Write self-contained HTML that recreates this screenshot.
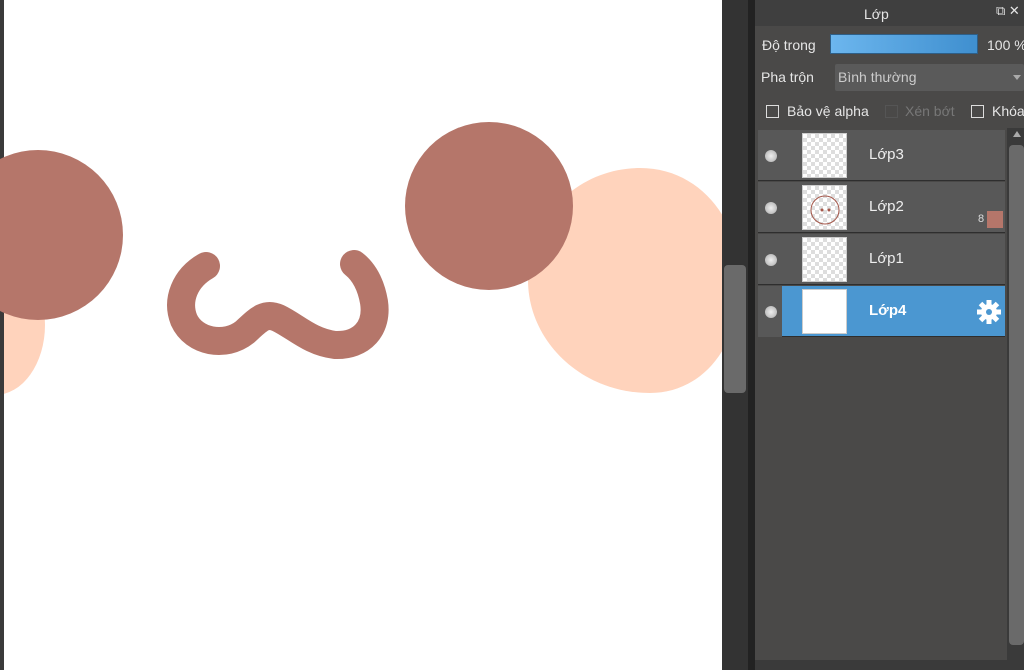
<!DOCTYPE html>
<html><head><meta charset="utf-8"><style>
*{margin:0;padding:0;box-sizing:border-box}
body{width:1024px;height:670px;overflow:hidden;background:#fff;position:relative;font-family:"Liberation Sans","DejaVu Sans",sans-serif;font-size:14px}
.abs{position:absolute;white-space:nowrap}
.t{color:#e6e6e6}
.row{position:absolute;left:758px;width:247px;height:51px;background:#585858;border-bottom:1px solid #2e2e2e}
.eye{position:absolute;left:7px;top:20px;width:12px;height:12px;border-radius:50%;background:radial-gradient(#eee,#aaa)}
.th{position:absolute;left:44px;top:3px;width:45px;height:45px;border:1px solid #ccc;background-color:#fff;background-image:linear-gradient(45deg,#ddd 25%,transparent 25%,transparent 75%,#ddd 75%),linear-gradient(45deg,#ddd 25%,transparent 25%,transparent 75%,#ddd 75%);background-size:8px 8px;background-position:0 0,4px 4px}
.nm{position:absolute;left:111px;top:16px;color:#eee;font-size:15px}
.cb{position:absolute;width:13px;height:13px;border:1px solid #ddd}
</style></head><body>
<svg class="abs" style="left:0;top:0" width="722" height="670">
<rect width="722" height="670" fill="#fff"/>
<ellipse cx="-5" cy="325" rx="50" ry="70" fill="#ffd3bc"/>
<rect width="4" height="670" fill="#3a3a3a"/>
<circle cx="38" cy="235" r="85" fill="#b5766a"/>
<path d="M640 168 C700 168 740 220 740 280 C740 350 700 393 650 393 C580 393 528 340 528 280 C528 215 580 168 640 168Z" fill="#ffd3bc"/>
<circle cx="489" cy="206" r="84" fill="#b5766a"/>
<path d="M206 266 C185 278 176 300 184 320 C194 342 225 348 245 332 C258 320 265 312 278 318 C295 326 310 342 335 345 C362 346 378 328 374 302 C371 285 364 272 354 264" fill="none" stroke="#b5766a" stroke-width="28" stroke-linecap="round" stroke-linejoin="round"/>
</svg>
<div class="abs" style="left:722px;top:0;width:26px;height:670px;background:#333"></div>
<div class="abs" style="left:724px;top:265px;width:22px;height:128px;background:#6a6a6a;border-radius:4px"></div>
<div class="abs" style="left:748px;top:0;width:7px;height:670px;background:#222"></div>
<div class="abs" style="left:755px;top:0;width:269px;height:670px;background:#4a4948"></div>
<div class="abs" style="left:755px;top:0;width:269px;height:26px;background:#3f3f3f"></div>
<div class="abs t" style="left:864px;top:6px;font-size:14px">Lớp</div>
<div class="abs t" style="left:996px;top:3px;font-size:13px">⧉ ✕</div>
<div class="abs t" style="left:762px;top:37px">Độ trong</div>
<div class="abs" style="left:830px;top:34px;width:148px;height:20px;background:linear-gradient(90deg,#6cb6ee,#3f8fcf);border:1px solid #2e5f88"></div>
<div class="abs t" style="left:987px;top:37px">100 %</div>
<div class="abs t" style="left:761px;top:69px">Pha trộn</div>
<div class="abs" style="left:835px;top:64px;width:189px;height:27px;background:#5a5a5a;border-radius:2px"></div>
<div class="abs" style="left:838px;top:69px;color:#ccc">Bình thường</div>
<div class="abs" style="left:1013px;top:75px;border:4px solid transparent;border-top:5px solid #aaa"></div>
<div class="cb" style="left:766px;top:105px"></div><div class="abs t" style="left:787px;top:103px">Bảo vệ alpha</div>
<div class="cb" style="left:885px;top:105px;border-color:#555"></div><div class="abs" style="left:905px;top:103px;color:#777">Xén bớt</div>
<div class="cb" style="left:971px;top:105px"></div><div class="abs t" style="left:992px;top:103px">Khóa</div>
<div class="row" style="top:130px"><div class="eye"></div><div class="th"></div><div class="nm">Lớp3</div></div>
<div class="row" style="top:182px"><div class="eye"></div><div class="th"><svg width="43" height="43"><circle cx="22" cy="24" r="14" fill="none" stroke="#a5584b"/><circle cx="19" cy="24" r="1.5" fill="#a5584b"/><circle cx="26" cy="24" r="1.5" fill="#a5584b"/></svg></div><div class="nm">Lớp2</div><div class="abs" style="left:220px;top:31px;color:#ddd;font-size:11px">8</div><div class="abs" style="left:229px;top:29px;width:16px;height:17px;background:#b5766a"></div></div>
<div class="row" style="top:234px"><div class="eye"></div><div class="th"></div><div class="nm">Lớp1</div></div>
<div class="row" style="top:286px;background:#4b97d1"><div class="abs" style="left:0;top:0;width:24px;height:51px;background:#585858"></div><div class="eye"></div><div class="th" style="background:#fff"></div><div class="nm" style="font-weight:bold;color:#fff">Lớp4</div>
<svg class="abs" style="left:219px;top:14px" width="24" height="24" viewBox="-12 -12 24 24"><g fill="#fff"><circle r="8"/><g id="tt"><rect x="-2.5" y="-12" width="5" height="6"/></g><use href="#tt" transform="rotate(45)"/><use href="#tt" transform="rotate(90)"/><use href="#tt" transform="rotate(135)"/><use href="#tt" transform="rotate(180)"/><use href="#tt" transform="rotate(225)"/><use href="#tt" transform="rotate(270)"/><use href="#tt" transform="rotate(315)"/></g><circle r="3" fill="#4b97d1"/></svg></div>
<div class="abs" style="left:1007px;top:128px;width:17px;height:542px;background:#3a3a3a"></div>
<div class="abs" style="left:1013px;top:131px;border:4px solid transparent;border-bottom:6px solid #aaa;border-top:0"></div>
<div class="abs" style="left:1009px;top:145px;width:15px;height:500px;background:#6a6a6a;border-radius:4px"></div>
<div class="abs" style="left:755px;top:660px;width:269px;height:10px;background:#3a3a3a"></div>
</body></html>
